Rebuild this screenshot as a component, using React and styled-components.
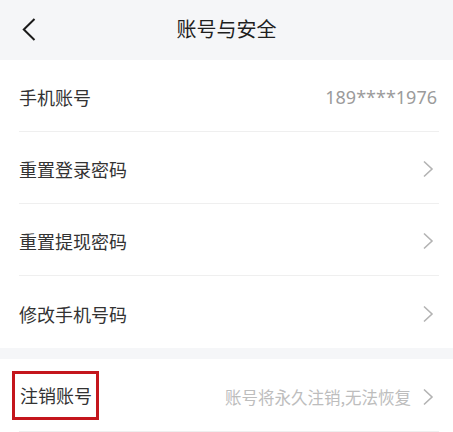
import React from "react";
import styled, { createGlobalStyle } from "styled-components";

const Global = createGlobalStyle`
  html, body { margin: 0; padding: 0; background: #fff; }
  body { font-family: "Noto Sans", "Noto Sans CJK SC", sans-serif; }
`;

const Page = styled.div`
  width: 453px;
  height: 432px;
  overflow: hidden;
  background: #fff;
`;

const Header = styled.header`
  height: 60px;
  background: #f5f6f8;
  display: grid;
  grid-template-columns: 60px 1fr 60px;
  align-items: center;
  padding-bottom: 0;
  box-sizing: border-box;
`;

const BackBtn = styled.div`
  display: flex;
  align-items: center;
  padding-left: 22px;
  height: 44px;
  margin-top: -1px;
`;

const Title = styled.h1`
  margin: 0 0 18px 0;
  font-size: 20px;
  font-weight: 400;
  color: #1f1f1f;
  text-align: center;
  line-height: 24px;
  padding-top: 18px;
`;

const Section = styled.section`
  background: #fff;
`;

const Gap = styled.div`
  height: 11px;
  background: #f5f6f8;
`;

const Row = styled.div`
  height: ${(p) => p.$h || 72}px;
  box-sizing: border-box;
  margin: 0 14px 0 19px;
  display: flex;
  align-items: center;
  justify-content: space-between;
  border-bottom: ${(p) => (p.$last ? "none" : "1px solid #efefef")};
  padding-top: 3px;
`;

const Label = styled.span`
  font-size: 18px;
  color: #333;
  font-family: "Noto Sans CJK SC", sans-serif;
`;

const Marked = styled.span`
  display: inline-flex;
  align-items: center;
  height: 49px;
  box-sizing: border-box;
  margin-left: -7px;
  margin-top: -3px;
  padding: 0 4px 0 5px;
  border: 3px solid #c4161c;
`;

const Right = styled.div`
  display: flex;
  align-items: center;
  gap: 11px;
`;

const Value = styled.span`
  font-size: 18px;
  color: #9b9b9b;
  margin-right: 2px;
`;

const Hint = styled.span`
  font-size: 16.5px;
  color: #bdbdbd;
  font-family: "Noto Sans CJK SC", sans-serif;
`;

const Chevron = () => (
  <svg width="12" height="18" viewBox="0 0 12 18" style={{ marginRight: 5 }}>
    <polyline points="2,1.5 10,9 2,16.5" fill="none" stroke="#b3b3b3" strokeWidth="1.6" />
  </svg>
);

const BackIcon = () => (
  <svg width="14" height="23" viewBox="0 0 14 23">
    <polyline points="12.5,1 1.8,11.5 12.5,22" fill="none" stroke="#1a1a1a" strokeWidth="2" />
  </svg>
);

const items = ["重置登录密码", "重置提现密码", "修改手机号码"];

export default function App() {
  return (
    <Page>
      <Global />
      <Header>
        <BackBtn>
          <BackIcon />
        </BackBtn>
        <Title>账号与安全</Title>
        <div />
      </Header>
      <Section>
        <Row>
          <Label>手机账号</Label>
          <Value>189****1976</Value>
        </Row>
        {items.map((t, i) => (
          <Row key={t} $last={i === items.length - 1}>
            <Label>{t}</Label>
            <Right>
              <Chevron />
            </Right>
          </Row>
        ))}
      </Section>
      <Gap />
      <Section>
        <Row $h={73}>
          <Marked>
            <Label>注销账号</Label>
          </Marked>
          <Right>
            <Hint>账号将永久注销,无法恢复</Hint>
            <Chevron />
          </Right>
        </Row>
      </Section>
    </Page>
  );
}
